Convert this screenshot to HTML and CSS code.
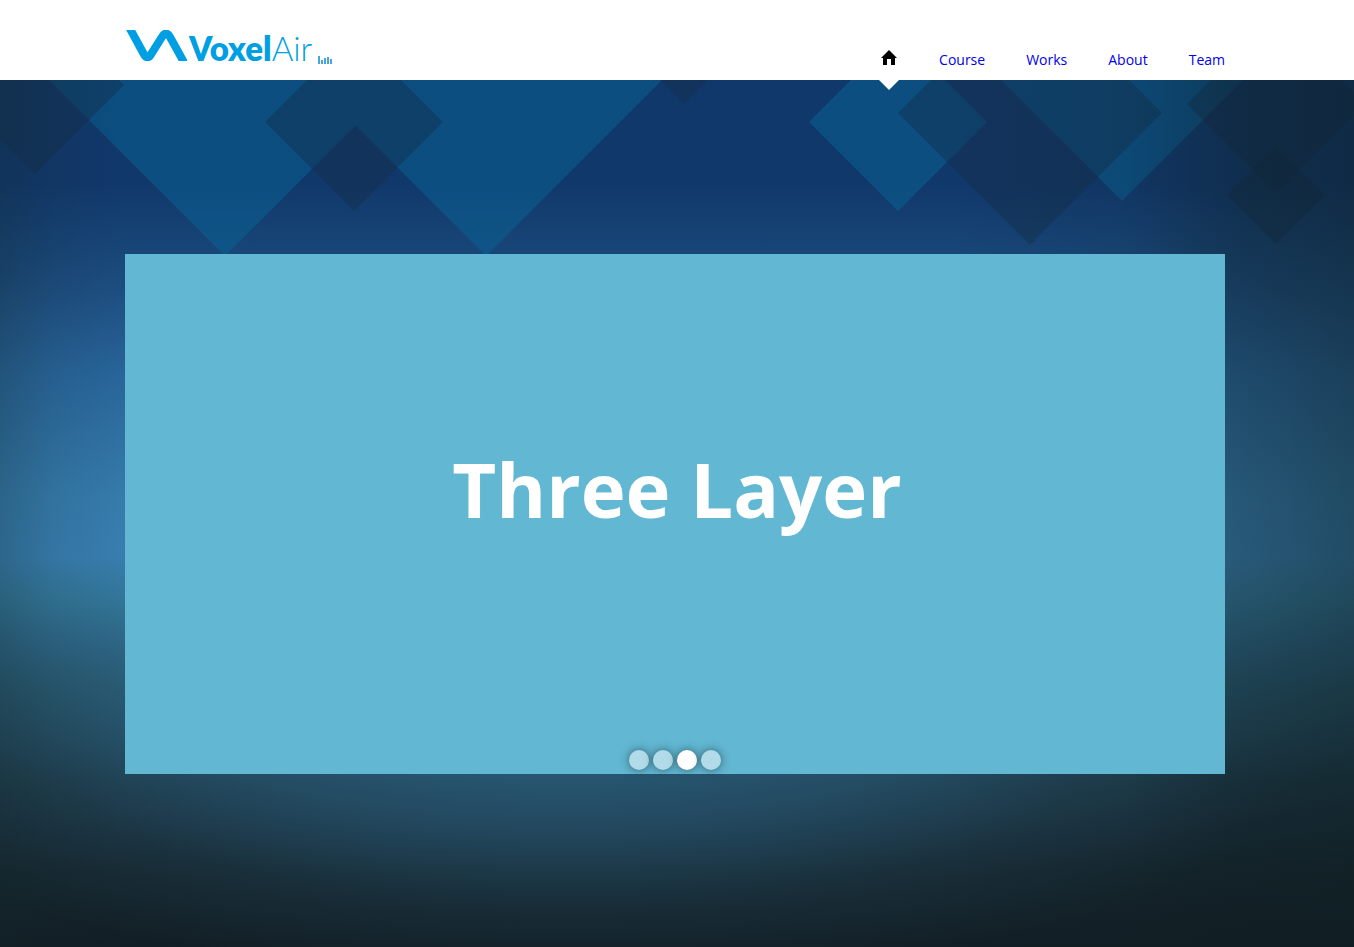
FILE: index.html
```html
<!DOCTYPE html>
<html lang="en">
<head>
<meta charset="utf-8">
<title>VoxelAir</title>
<link rel="stylesheet" href="styles.css">
</head>
<body>
<header class="header">
  <div class="container header-row">
    <a class="logo" href="#" aria-label="VoxelAir">
      <svg class="logo-mark" viewBox="0 0 61 31" aria-hidden="true"><path d="M2.500 -4L17.500 23.500Q21.500 31 25.500 23.500L36 7Q40 0 44 7L60 36" /></svg>
      <span class="logo-text"><b>Voxel</b>Air</span>
      <svg class="logo-bars" viewBox="0 0 14 8" aria-hidden="true"><path d="M0 0h2v8H0zM3 4h2v4H3zM6 2h2v6H6zM9 1h2v7H9zM12 3h2v5h-2z"/></svg>
    </a>
    <nav class="nav" aria-label="Main">
      <a class="nav-link nav-home" href="#" aria-label="Home"><svg viewBox="0 0 16 15" aria-hidden="true"><path d="M8 0L16 8H14V15H10V9H6V15H2V8H0Z"/></svg></a>
      <a class="nav-link" href="#">Course</a>
      <a class="nav-link" href="#">Works</a>
      <a class="nav-link" href="#">About</a>
      <a class="nav-link" href="#">Team</a>
    </nav>
  </div>
</header>
<main class="hero">
  <svg class="backdrop" viewBox="0 80 1354 867" preserveAspectRatio="xMidYMin slice" aria-hidden="true">
    <g class="diamond-blue">
      <path d="M225 256L49 80H401ZM486 256L310 80H662ZM809 122L898 33L987 122L898 211ZM1122 201L1001 80H1243Z"/>
    </g>
    <g class="diamond-dark">
      <path d="M35 174L-54 85L35 -4L124 85ZM354 211L265 122L354 33L443 122ZM684 104L660 80H708Z"/>
      <path d="M1030 245L898 113L1030 -19L1162 113Z"/>
      <path d="M1276 193L1187 104L1276 15L1365 104Z"/>
      <path d="M1276 244L1227 195L1276 146L1325 195Z"/>
    </g>
  </svg>
  <div class="container">
    <section class="slide" aria-label="Slides">
      <h1 class="slide-title">Three Layer</h1>
      <div class="dots">
        <button class="dot" type="button" aria-label="Slide 1"></button>
        <button class="dot" type="button" aria-label="Slide 2"></button>
        <button class="dot dot-active" type="button" aria-label="Slide 3"></button>
        <button class="dot" type="button" aria-label="Slide 4"></button>
      </div>
    </section>
  </div>
</main>
</body>
</html>
```
FILE: styles.css
```css
* { box-sizing: border-box; }
body {
  margin: 0;
  min-height: 100vh;
  display: flex;
  flex-direction: column;
  font-family: "Open Sans", "Noto Sans", sans-serif;
  background: #101b22;
}
.header, .hero { padding-right: 4px; }
.header { background: #fff; }
.container { width: 100%; max-width: 1100px; margin: 0 auto; }
.header-row {
  display: flex;
  align-items: flex-end;
  justify-content: space-between;
  height: 80px;
}
.logo {
  display: flex;
  align-items: flex-end;
  padding: 0 0 16px 1px;
  color: #009fe3;
  text-decoration: none;
}
.logo-mark {
  width: 61px;
  height: 31px;
  margin-bottom: 3px;
  fill: none;
  stroke: #009fe3;
  stroke-width: 8;
}
.logo-text {
  margin: 0 6px 0 2px;
  font: 300 33px/32px Lato, sans-serif;
}
.logo-text b { font-weight: 800; }
.logo-bars { width: 14px; height: 8px; fill: #4ba5d9; }
.nav { display: flex; gap: 41px; }
.nav-link {
  height: 32px;
  color: #00e;
  font-size: 14px;
  line-height: 24px;
  text-decoration: none;
}
.nav-home {
  position: relative;
  z-index: 2;
  width: 18px;
  padding: 2px 1px 0;
  line-height: 0;
}
.nav-home svg { width: 16px; height: 15px; fill: #000; }
.nav-home::after {
  content: "";
  position: absolute;
  top: 100%;
  left: -1px;
  border: 10px solid transparent;
  border-top-color: #fff;
  border-bottom: 0;
}
.hero {
  position: relative;
  flex: 1;
  overflow: hidden;
  padding-top: 174px;
  padding-bottom: 173px;
  background:
    radial-gradient(56% 28% at 42% 76%, rgba(50, 115, 155, .58), rgba(48, 110, 148, .4) 40%, rgba(45, 100, 130, .16) 70%, rgba(40, 90, 120, 0)),
    linear-gradient(#11386b 0, #11386b 12%, #184678 20%, #1d4d80 24%, #28659a 34%, #2f70a2 41%, #357bac 48%, #387eb0 55%, #337799 60%, #2d6585 65%, #27566c 70%, #224659 76%, #1c3744 81%, #192d39 86%, #15252c 91%, #121e25 100%);
}
.hero::after {
  content: "";
  position: absolute;
  inset: 0;
  background: linear-gradient(90deg, rgba(18, 40, 44, .28), rgba(18, 40, 44, .1) 4%, rgba(18, 40, 44, 0) 9%, rgba(14, 30, 34, 0) 70%, rgba(14, 30, 34, .1) 83%, rgba(14, 30, 34, .38) 91%, rgba(14, 30, 34, .52));
}
.backdrop { position: absolute; inset: 0; width: 100%; height: 100%; }
.diamond-blue { fill: rgba(8, 100, 150, .5); }
.diamond-dark { fill: rgba(20, 45, 70, .4); }
.hero .container { position: relative; z-index: 1; }
.slide {
  display: flex;
  flex-direction: column;
  align-items: center;
  justify-content: space-between;
  height: 520px;
  padding: 175px 0 4px;
  background: #62b7d2;
}
.slide-title {
  margin: 0;
  padding-left: 4px;
  color: #fff;
  font-size: 76px;
  font-weight: 700;
  line-height: 120px;
}
.dots { display: flex; gap: 4px; }
.dot {
  width: 20px;
  height: 20px;
  padding: 0;
  border: 0;
  border-radius: 50%;
  background: #b1dbe9;
  box-shadow: 0 0 10px rgba(0, 0, 0, .5);
}
.dot-active { background: #fff; }
```
